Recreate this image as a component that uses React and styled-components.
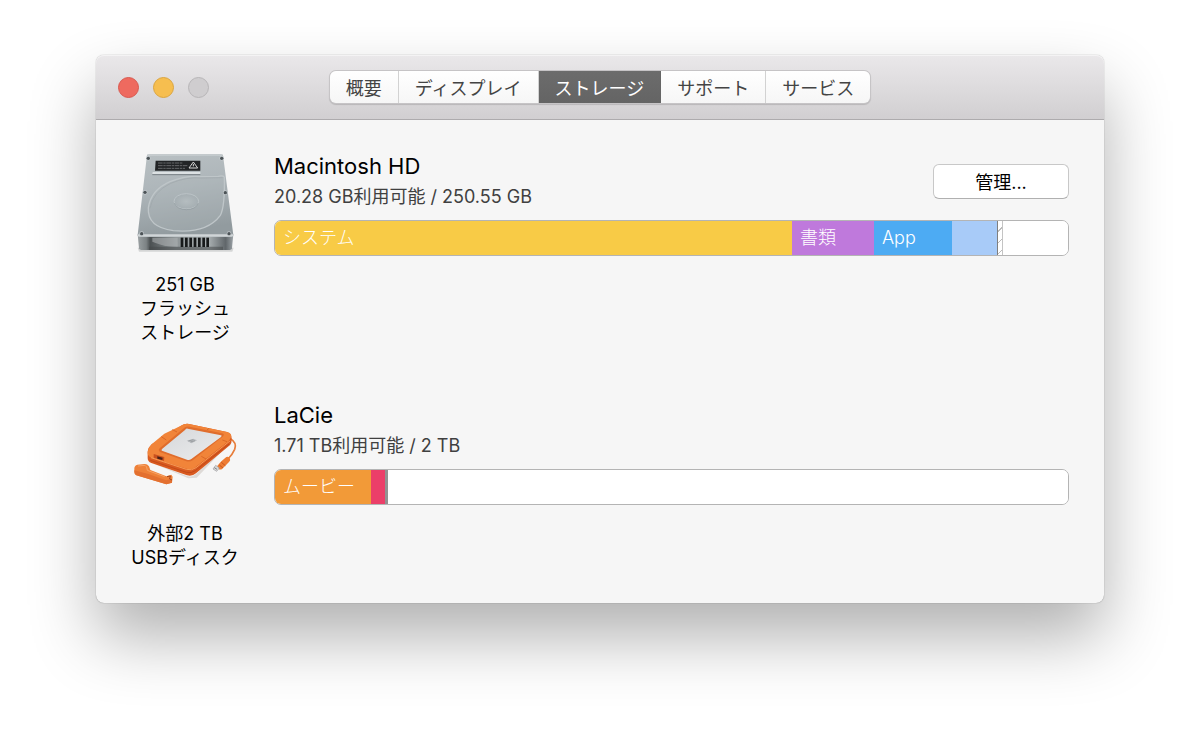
import styled, { createGlobalStyle } from 'styled-components';

const GlobalStyle = createGlobalStyle`
  * {
    box-sizing: border-box;
  }

  body {
    margin: 0;
    background-color: white;
    font-family: Inter, "Noto Sans CJK JP", sans-serif;
    font-size: 18px;
    color: black;
  }

  h2, p {
    margin: 0;
    font-weight: 400;
  }

  button {
    font-family: inherit;
    font-size: inherit;
  }
`;

const Desktop = styled.div`
  min-height: 100vh;
  padding: 55px 8%;
`;

const Window = styled.main`
  border-radius: 8px;
  background-color: #f6f6f6;
  box-shadow: 0 0 1px rgba(0, 0, 0, .5), 0 34px 66px rgba(0, 0, 0, .31);
`;

const TitleBar = styled.header`
  display: grid;
  grid-template-columns: 1fr auto 1fr;
  align-items: center;
  height: 65px;
  padding: 0 22px;
  border-bottom: 1px solid #adabad;
  border-radius: 8px 8px 0 0;
  background: linear-gradient(#eae8ea, #d1cfd1);
  box-shadow: inset 0 1px 0 #f4f3f4;
`;

const Lights = styled.div`
  display: flex;
  gap: 14px;
`;

const Light = styled.button`
  width: 21px;
  height: 21px;
  padding: 0;
  border: 1px solid ${({ $edge }) => $edge};
  border-radius: 50%;
  background-color: ${({ $color }) => $color};
`;

const Tabs = styled.div`
  display: flex;
  height: 32px;
  border-radius: 6px;
  box-shadow: 0 0 0 1px #c6c4c6, 0 1px 1px 1px rgba(0, 0, 0, .14);
  overflow: hidden;
`;

const Tab = styled.button`
  padding: 0 16px 1px;
  border: none;
  border-right: 1px solid #d2d2d2;
  background: linear-gradient(white, #f6f6f6);
  color: #444;
  white-space: nowrap;

  &:last-child {
    border-right: none;
  }

  &[aria-selected='true'] {
    border-color: #666;
    background: linear-gradient(#6c6c6c, #646464);
    color: white;
  }
`;

const DiskList = styled.div`
  display: flex;
  flex-direction: column;
  gap: 54px;
  padding: 30px 35px 33px;
`;

const DiskRow = styled.section`
  display: grid;
  grid-template-columns: 108px 1fr;
  gap: 35px;
`;

const Device = styled.div`
  display: flex;
  flex-direction: column;
  align-items: center;
  gap: 19px;

  svg {
    width: 108px;
    height: 104px;
  }

  p {
    line-height: 24px;
    text-align: center;
    white-space: pre-line;
  }
`;

const Details = styled.div`
  display: flex;
  flex-direction: column;
  gap: 8px;
`;

const DetailsHead = styled.div`
  display: flex;
  justify-content: space-between;
  align-items: flex-start;
`;

const DiskName = styled.h2`
  font-size: 22px;
  line-height: 32px;
`;

const DiskSpace = styled.p`
  line-height: 30px;
  color: #404040;
`;

const ManageButton = styled.button`
  width: 136px;
  height: 35px;
  margin-top: 14px;
  padding: 0 0 2px;
  border: 1px solid #c8c8c8;
  border-bottom-color: #b0b0b0;
  border-radius: 6px;
  background-color: white;
  color: black;
`;

const UsageBar = styled.div`
  display: flex;
  height: 36px;
  border: 1px solid #b4b4b4;
  border-radius: 7px;
  background-color: white;
  overflow: hidden;
`;

const Segment = styled.div`
  flex: ${({ $size }) => $size} 1 0;
  min-width: 0;
  background: ${({ $fill }) => $fill};
  color: white;
  font-weight: 300;
  line-height: 34px;
  text-indent: 8px;
  white-space: nowrap;
`;

const lights = [
  { label: '閉じる', color: '#ee6a5f', edge: '#d9584e' },
  { label: 'しまう', color: '#f6be4f', edge: '#dba53f' },
  { label: '拡大', color: '#cfcdcf', edge: '#b7b5b7' },
];

const tabs = ['概要', 'ディスプレイ', 'ストレージ', 'サポート', 'サービス'];

const hatch = 'repeating-linear-gradient(135deg, #fff 0 7px, #bbb 7px 8px)';

const disks = [
  {
    name: 'Macintosh HD',
    space: '20.28 GB利用可能 / 250.55 GB',
    device: '251 GB\nフラッシュ\nストレージ',
    Icon: HardDiskIcon,
    manage: true,
    segments: [
      { size: 517, fill: '#f8cb46', label: 'システム' },
      { size: 82, fill: '#bf79dc', label: '書類' },
      { size: 78, fill: '#4dabf3', label: 'App' },
      { size: 45, fill: '#a8cbf8' },
      { size: 1, fill: '#7f7f7f' },
      { size: 4, fill: hatch },
      { size: 1, fill: '#c4c4c4' },
      { size: 65, fill: 'white' },
    ],
  },
  {
    name: 'LaCie',
    space: '1.71 TB利用可能 / 2 TB',
    device: '外部2 TB\nUSBディスク',
    Icon: RuggedDiskIcon,
    segments: [
      { size: 96, fill: '#f29a38', label: 'ムービー' },
      { size: 14, fill: '#eb3f69' },
      { size: 3, fill: '#929292' },
      { size: 680, fill: 'white' },
    ],
  },
];

function HardDiskIcon() {
  const screws = [[70, 40], [290, 40], [60, 142], [301, 143], [50, 266], [312, 266]];
  const vents = [170, 183, 196, 209, 222, 235, 247];
  return (
    <svg viewBox="18 15 324 312" aria-hidden="true">
      <defs>
        <linearGradient id="hdTop" x1="0" y1="0" x2="0.2" y2="1">
          <stop offset="0" stopColor="#b9c0c3" />
          <stop offset="0.45" stopColor="#aeb6ba" />
          <stop offset="1" stopColor="#929b9f" />
        </linearGradient>
        <linearGradient id="hdFront" x1="0" y1="0" x2="1" y2="0">
          <stop offset="0" stopColor="#9ba1a3" />
          <stop offset="0.09" stopColor="#7c8284" />
          <stop offset="0.13" stopColor="#4b5052" />
          <stop offset="0.4" stopColor="#8e9496" />
          <stop offset="0.75" stopColor="#a6acae" />
          <stop offset="0.92" stopColor="#60666a" />
          <stop offset="1" stopColor="#9da4a8" />
        </linearGradient>
        <radialGradient id="hdHub">
          <stop offset="0" stopColor="#b5bdc0" />
          <stop offset="1" stopColor="#a5aeb2" />
        </radialGradient>
      </defs>
      <path d="M38 308 L326 308 L322 320 L42 320 Z" fill="#d5d6d6" />
      <path d="M38 268 L325 268 L321 310 Q320 315 314 315 L49 315 Q43 315 42 310 Z" fill="url(#hdFront)" />
      <path d="M82 278 L158 278 L158 306 L130 304 Q100 298 82 290 Z" fill="#b0b5b6" opacity="0.55" />
      <path d="M72 305 L294 305 L294 315 L72 315 Z" fill="#45494b" opacity="0.55" />
      {vents.map((x) => (
        <rect key={x} x={x - 3} y="278" width="8" height="28" fill="#17191a" />
      ))}
      <path d="M66 30 Q67 27 72 27 L288 27 Q293 27 294 31 L325 270 Q325 275 320 275 L43 275 Q37 275 38 269 Z" fill="url(#hdTop)" />
      <path d="M38 269 Q37 275 43 275 L320 275 Q325 275 325 270 L324 268 L39 268 Z" fill="#d0d5d7" />
      <path d="M68 30 L292 30" stroke="#d2d7d9" strokeWidth="3" />
      <path
        d="M298 95 Q291 91 280 94 L228 95 Q185 90 135 110 Q78 135 70 188 Q66 247 145 257 Q245 266 286 211 Q300 185 298 95"
        fill="#b0b8bb" fillOpacity="0.35" stroke="#bfc6c9" strokeWidth="4"
      />
      <path
        d="M293 98 L228 99 Q185 95 137 115 Q84 140 75 190"
        fill="none" stroke="#9ea6aa" strokeWidth="2"
      />
      <ellipse cx="184" cy="169" rx="37" ry="23" fill="url(#hdHub)" stroke="#bcc4c7" strokeWidth="3" />
      <path d="M148 174 Q155 193 184 194 Q213 193 220 174" fill="none" stroke="#8e979b" strokeWidth="2" />
      <path d="M92 47 L226 47 L226 77 L90 77 Z" fill="#222426" />
      <path d="M99 54 H174 M99 62 H187 M99 70 H180" stroke="#66686a" strokeWidth="3" strokeDasharray="14 2 7 2" />
      <path d="M192 69 L205 51 L218 69 Z M205 57 V64" fill="none" stroke="#d5d5d5" strokeWidth="3" />
      <path d="M83 81 L226 81 L226 87 L82 87 Z" fill="#dce1e3" />
      <path d="M82 89 H226" stroke="#798286" strokeWidth="3" />
      {screws.map(([x, y]) => (
        <g key={`${x}-${y}`}>
          <circle cx={x} cy={y} r="7" fill="#c2c8cb" />
          <circle cx={x} cy={y} r="5" fill="#4c5357" />
        </g>
      ))}
    </svg>
  );
}

function RuggedDiskIcon() {
  return (
    <svg viewBox="18 -33 324 312" aria-hidden="true">
      <defs>
        <linearGradient id="plate" x1="0" y1="0" x2="1" y2="1">
          <stop offset="0" stopColor="#d5d7da" />
          <stop offset="1" stopColor="#eceded" />
        </linearGradient>
      </defs>
      <path d="M84 160 L184 197 Q200 204 216 190 L290 118 L285 130 L215 203 L190 205 Z" fill="#dedad7" />
      <path d="M316 86 Q337 98 329 118 Q322 134 309 147" fill="none" stroke="#e77d3b" strokeWidth="5" />
      <path
        d="M168 47 Q179 40 192 42 L306 66 Q320 70 320 86 L319 98 Q317 105 308 111 L213 190 Q202 200 186 196 L79 159 Q68 155 68 144 L68 124 Q70 112 80 103 Z"
        fill="#d95a20"
      />
      <path
        d="M168 47 Q179 40 192 42 L306 66 Q322 70 318 82 Q315 90 308 95 L211 172 Q200 181 185 176 L80 143 Q68 139 68 128 Q70 112 80 103 L118 71 Z"
        fill="#f18439"
      />
      <path d="M78 143 L184 178 Q200 183 213 173 L316 92" fill="none" stroke="#f59a56" strokeWidth="3" />
      <path d="M76 151 L184 187 Q199 191 211 182 L312 102" fill="none" stroke="#c34a19" strokeWidth="3" />
      <path d="M180 52 Q186 48 194 50 L291 70 Q301 73 293 80 L203 151 Q194 157 182 153 L105 126 Q98 121 104 115 Z" fill="#e06d2c" />
      <path d="M188 56 L288 76 Q292 77 288 81 L199 147 Q193 151 186 149 L113 123 Q107 121 112 116 L180 60 Q184 55 188 56 Z" fill="url(#plate)" />
      <path d="M109 80 L124 90 M142 59 L156 66 M246 60 L252 55 M292 90 L306 95 M229 139 L243 147" stroke="#da6828" strokeWidth="3" />
      <path d="M185 92 L205 86 L216 91 L200 100 Z" fill="#b9bcbf" />
      <path d="M190 93 L205 89 M196 96 L210 92" stroke="#8b8f93" strokeWidth="2" />
      <path d="M86 132 L118 141 L117 153 L86 143 Z" fill="#c9511f" />
      <path d="M97 139 L113 143 L112 150 L97 146 Z" fill="#4a2119" />
      <path d="M289 154 L304 141 Q311 138 315 146 Q317 152 312 156 L292 176 Q286 181 280 176 L276 169 Z" fill="#ee7c33" />
      <path d="M283 165 L294 174 M289 157 L301 167" stroke="#c9551e" strokeWidth="3" />
      <path d="M272 166 L283 174 L275 184 L264 177 Z" fill="#d9dadb" stroke="#9b9c9d" strokeWidth="2" />
      <path d="M268 173 L276 178" stroke="#555" strokeWidth="2" />
      <path
        d="M28 175 Q28 167 37 164 L58 162 Q66 161 72 169 L76 180 L124 199 L139 194 L143 200 L141 218 L124 223 L34 196 Q27 192 28 184 Z"
        fill="#ee8139"
      />
      <path d="M28 181 L70 192 L123 211 L141 206 L141 218 L124 223 L34 196 Q27 192 28 181 Z" fill="#e37030" />
      <path d="M39 168 L60 166 Q66 168 67 181 L119 200" fill="none" stroke="#f7a366" strokeWidth="3" />
      <path d="M126 200 L136 198 L134 207 L141 210" fill="none" stroke="#a3441b" strokeWidth="3" />
    </svg>
  );
}

function Disk({ name, space, device, Icon, manage, segments }) {
  return (
    <DiskRow>
      <Device>
        <Icon />
        <p>{device}</p>
      </Device>
      <Details>
        <DetailsHead>
          <div>
            <DiskName>{name}</DiskName>
            <DiskSpace>{space}</DiskSpace>
          </div>
          {manage && <ManageButton type="button">管理...</ManageButton>}
        </DetailsHead>
        <UsageBar>
          {segments.map(({ size, fill, label }, i) => (
            <Segment key={i} $size={size} $fill={fill}>
              {label}
            </Segment>
          ))}
        </UsageBar>
      </Details>
    </DiskRow>
  );
}

function App() {
  return (
    <>
      <GlobalStyle />
      <Desktop>
        <Window>
          <TitleBar>
            <Lights>
              {lights.map(({ label, color, edge }) => (
                <Light key={label} type="button" aria-label={label} $color={color} $edge={edge} />
              ))}
            </Lights>
            <Tabs role="tablist">
              {tabs.map((tab) => (
                <Tab key={tab} type="button" role="tab" aria-selected={tab === 'ストレージ'}>
                  {tab}
                </Tab>
              ))}
            </Tabs>
          </TitleBar>
          <DiskList>
            {disks.map((disk) => (
              <Disk key={disk.name} {...disk} />
            ))}
          </DiskList>
        </Window>
      </Desktop>
    </>
  );
}

export default App;
